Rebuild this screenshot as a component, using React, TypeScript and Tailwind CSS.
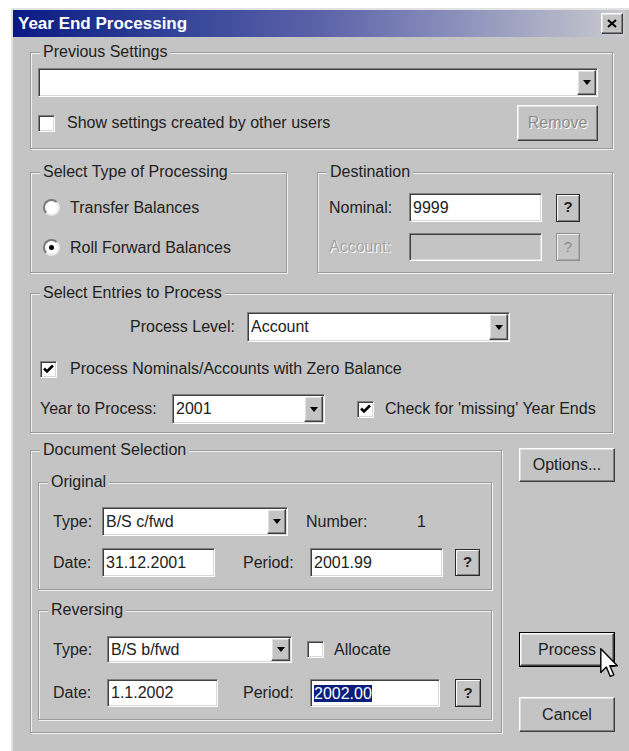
import React from 'react';

// Win2000-style bevels
const raised =
  'border border-t-white border-l-white border-r-[#404040] border-b-[#404040] shadow-[inset_-1px_-1px_0_#808080,inset_1px_1px_0_#e0e0e0]';
const sunken =
  'border border-t-[#808080] border-l-[#808080] border-r-white border-b-white shadow-[inset_1px_1px_0_#404040,inset_-1px_-1px_0_#d8d8d8]';
const disabledText = 'text-[#8c8c8c] [text-shadow:1px_1px_0_#ffffff]';

const DownArrow: React.FC = () => (
  <svg width="8" height="5" viewBox="0 0 8 5">
    <path d="M0 0h8L4 5z" fill="#000" />
  </svg>
);

interface BoxProps {
  className?: string;
  children?: React.ReactNode;
}

const Group: React.FC<BoxProps & { title: string }> = ({ title, className = '', children }) => (
  <div
    className={`relative border border-[#9a9a9a] shadow-[inset_1px_1px_0_#f2f2f2,1px_1px_0_#f2f2f2] ${className}`}
  >
    <span className="absolute -top-[10px] left-[9px] px-[3px] leading-[18px] bg-[#c4c4c4]">{title}</span>
    {children}
  </div>
);

const Combo: React.FC<{ value?: string; className?: string }> = ({ value = '', className = '' }) => (
  <div className={`flex bg-white ${sunken} ${className}`}>
    <span className="flex-1 flex items-center pl-[3px] whitespace-nowrap overflow-hidden">{value}</span>
    <span className={`w-[19px] my-[1px] mr-[1px] flex items-center justify-center bg-[#c4c4c4] ${raised}`}>
      <DownArrow />
    </span>
  </div>
);

const Field: React.FC<{ value?: string; className?: string; disabled?: boolean; selected?: boolean }> = ({
  value = '',
  className = '',
  disabled,
  selected,
}) => (
  <div className={`flex items-center pl-[3px] ${disabled ? 'bg-[#c4c4c4]' : 'bg-white'} ${sunken} ${className}`}>
    {selected ? <span className="bg-[#0a1e7c] text-white leading-[17px]">{value}</span> : value}
  </div>
);

const Check: React.FC<{ checked?: boolean }> = ({ checked }) => (
  <span className={`w-[17px] h-[17px] shrink-0 flex items-center justify-center bg-white ${sunken}`}>
    {checked && (
      <svg width="11" height="10" viewBox="0 0 11 10">
        <path d="M1 4.5l3 3L10 1.5" stroke="#000" strokeWidth="2.6" fill="none" />
      </svg>
    )}
  </span>
);

const Radio: React.FC<{ checked?: boolean }> = ({ checked }) => (
  <span className="w-[17px] h-[17px] shrink-0 rounded-full bg-white border-2 border-t-[#7a7a7a] border-l-[#7a7a7a] border-r-[#e8e8e8] border-b-[#e8e8e8] flex items-center justify-center">
    {checked && <span className="w-[5px] h-[5px] rounded-full bg-black" />}
  </span>
);

const Lookup: React.FC<{ disabled?: boolean; className?: string }> = ({ disabled, className = '' }) => (
  <span
    className={`flex items-center justify-center bg-[#c4c4c4] font-bold text-[15px] border ${
      disabled
        ? 'border-[#909090] text-[#8c8c8c] shadow-[inset_1px_1px_0_#f0f0f0,inset_-1px_-1px_0_#a8a8a8] font-normal'
        : 'border-[#2a2a2a] shadow-[inset_1px_1px_0_#ffffff,inset_-1px_-1px_0_#808080]'
    } ${className}`}
  >
    ?
  </span>
);

const Button: React.FC<{ label: string; className?: string; disabled?: boolean }> = ({ label, className = '', disabled }) => (
  <button
    className={`flex items-center justify-center bg-[#c4c4c4] ${raised} ${disabled ? disabledText : ''} ${className}`}
  >
    {label}
  </button>
);

const Cursor: React.FC = () => (
  <svg className="absolute left-[80px] top-[15px]" width="19" height="30" viewBox="0 0 12 19">
    <path
      d="M0.5 0.5v15l3.5-3.5 2.5 6 2.2-1-2.5-5.8H11z"
      fill="#fff"
      stroke="#000"
      strokeWidth="0.9"
      strokeLinejoin="round"
    />
  </svg>
);

export default function App() {
  return (
    <div className="min-h-[751px] bg-white pl-[11px] pt-[8px] font-['Liberation_Sans',Arial,sans-serif] text-[16px] text-[#222]">
      <div className="w-[618px] h-[743px] bg-[#c4c4c4] border-l-2 border-t-2 border-[#e2e2e2]">
        {/* title bar */}
        <div className="w-[612px] h-[27px] flex items-center justify-between pl-[5px] pr-[2px] bg-linear-to-r from-[#0a1884] via-[#5c62a8] to-[#cacacf]">
          <span className="text-white font-bold text-[17px] leading-none">Year End Processing</span>
          <span className={`w-[22px] h-[21px] flex items-center justify-center bg-[#c4c4c4] ${raised}`}>
            <svg width="10" height="9" viewBox="0 0 10 9">
              <path d="M1 1l8 7M9 1L1 8" stroke="#000" strokeWidth="2" />
            </svg>
          </span>
        </div>

        <div className="pl-[17px] pt-[15px]">
          <Group title="Previous Settings" className="w-[583px] h-[97px] px-[7px] pt-[15px]">
            <Combo className="w-[560px] h-[29px]" />
            <div className="mt-[8px] w-[560px] flex items-center justify-between">
              <div className="flex items-center gap-[12px]">
                <Check />
                <span>Show settings created by other users</span>
              </div>
              <Button label="Remove" disabled className="w-[81px] h-[36px]" />
            </div>
          </Group>

          <div className="mt-[23px] flex gap-[30px]">
            <Group title="Select Type of Processing" className="w-[257px] h-[101px] pl-[12px] pt-[26px]">
              <div className="flex items-center gap-[10px] h-[17px]">
                <Radio />
                <span>Transfer Balances</span>
              </div>
              <div className="mt-[23px] flex items-center gap-[10px] h-[17px]">
                <Radio checked />
                <span>Roll Forward Balances</span>
              </div>
            </Group>

            <Group title="Destination" className="w-[296px] h-[101px] pl-[11px] pt-[20px]">
              <div className="flex items-center">
                <span className="w-[80px]">Nominal:</span>
                <Field value="9999" className="w-[133px] h-[29px]" />
                <Lookup className="ml-[14px] w-[24px] h-[28px]" />
              </div>
              <div className="mt-[11px] flex items-center">
                <span className={`w-[80px] ${disabledText} text-[#a4a4a4]`}>Account:</span>
                <Field disabled className="w-[133px] h-[28px]" />
                <Lookup disabled className="ml-[14px] w-[24px] h-[28px]" />
              </div>
            </Group>
          </div>

          <Group title="Select Entries to Process" className="mt-[20px] w-[583px] h-[140px] pt-[18px]">
            <div className="flex items-center">
              <span className="w-[204px] text-right">Process Level:</span>
              <Combo value="Account" className="ml-[12px] w-[263px] h-[30px]" />
            </div>
            <div className="mt-[15px] pl-[9px] flex items-center gap-[13px]">
              <Check checked />
              <span>Process Nominals/Accounts with Zero Balance</span>
            </div>
            <div className="mt-[13px] pl-[9px] flex items-center">
              <span className="w-[132px]">Year to Process:</span>
              <Combo value="2001" className="w-[153px] h-[30px]" />
              <div className="ml-[32px] flex items-center gap-[11px]">
                <Check checked />
                <span>Check for 'missing' Year Ends</span>
              </div>
            </div>
          </Group>

          <div className="mt-[17px] flex">
            <Group title="Document Selection" className="w-[472px] h-[283px] pl-[7px] pt-[31px]">
              <Group title="Original" className="w-[454px] h-[108px] pl-[14px] pt-[24px]">
                <div className="flex items-center">
                  <span className="w-[49px]">Type:</span>
                  <Combo value="B/S c/fwd" className="w-[186px] h-[29px]" />
                  <span className="ml-[18px] w-[111px]">Number:</span>
                  <span>1</span>
                </div>
                <div className="mt-[12px] flex items-center">
                  <span className="w-[49px]">Date:</span>
                  <Field value="31.12.2001" className="w-[113px] h-[29px]" />
                  <span className="ml-[28px] w-[67px]">Period:</span>
                  <Field value="2001.99" className="w-[133px] h-[29px]" />
                  <Lookup className="ml-[12px] w-[25px] h-[27px]" />
                </div>
              </Group>

              <Group title="Reversing" className="mt-[20px] w-[454px] h-[110px] pl-[14px] pt-[25px]">
                <div className="flex items-center">
                  <span className="w-[54px]">Type:</span>
                  <Combo value="B/S b/fwd" className="w-[185px] h-[27px]" />
                  <div className="ml-[15px] flex items-center gap-[10px]">
                    <Check />
                    <span>Allocate</span>
                  </div>
                </div>
                <div className="mt-[16px] flex items-center">
                  <span className="w-[54px]">Date:</span>
                  <Field value="1.1.2002" className="w-[111px] h-[28px]" />
                  <span className="ml-[25px] w-[67px]">Period:</span>
                  <Field value="2002.00" selected className="w-[130px] h-[28px]" />
                  <Lookup className="ml-[15px] w-[26px] h-[28px]" />
                </div>
              </Group>
            </Group>

            <div className="ml-[17px] -mt-[2px] flex flex-col">
              <Button label="Options..." className="w-[96px] h-[34px]" />
              <div className="relative mt-[150px] w-[96px] h-[35px] border border-black flex">
                <Button label="Process" className="flex-1" />
                <Cursor />
              </div>
              <Button label="Cancel" className="mt-[30px] w-[96px] h-[35px]" />
            </div>
          </div>
        </div>
      </div>
    </div>
  );
}
